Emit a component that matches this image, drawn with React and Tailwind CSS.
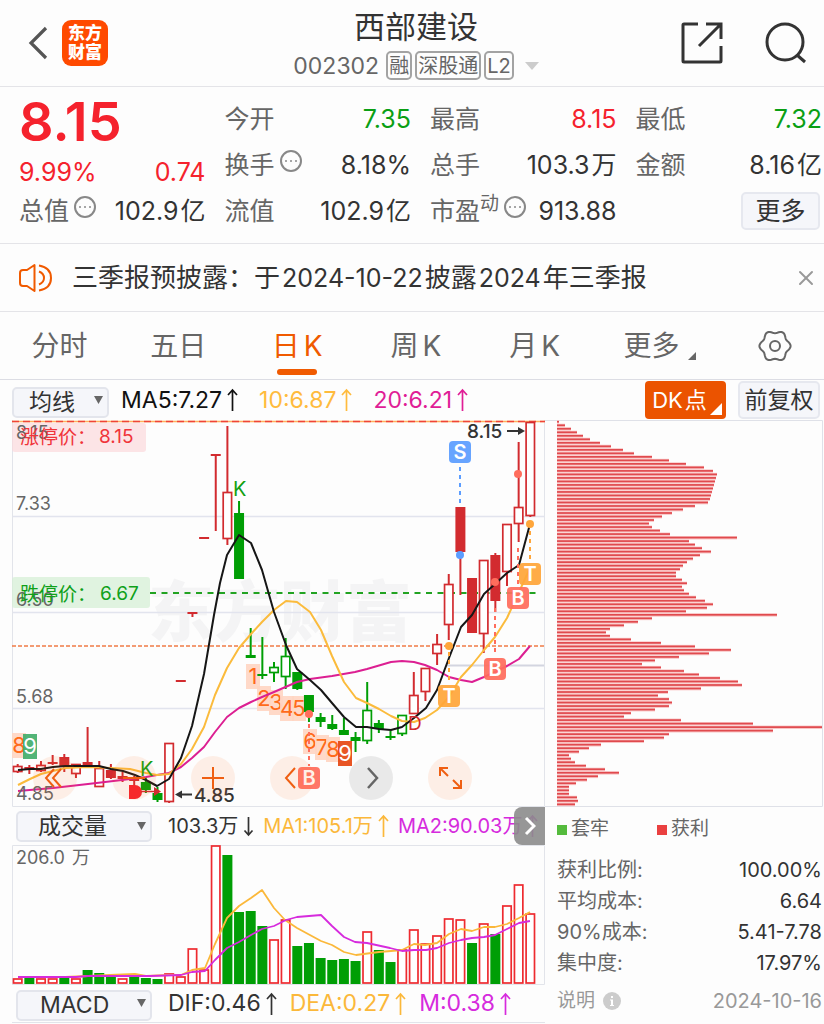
import { useState } from "react";
import { CircleEllipsis, X } from "lucide-react";

const TABS = ["分时", "五日", "日K", "周K", "月K"];

// x of the first candle and distance between candles
const X0 = 17.7;
const STEP = 11.65;
const cx = (i) => X0 + i * STEP;

// [type, high, top, bottom, low]; r/g hollow, R/G filled
const CANDLES = [
  ["r", 764, 766, 771, 773],
  ["R", 765, 767, 769, 774],
  ["r", 761, 765, 770, 772],
  ["R", 755, 762, 763, 765],
  ["R", 754, 757, 767, 772],
  ["r", 764, 764, 773, 778],
  ["R", 727, 762, 765, 766],
  ["r", 761, 768, 786, 786],
  ["R", 764, 770, 778, 779],
  ["R", 772, 776, 779, 782],
  ["R", 776, 778, 781, 785],
  ["G", 777, 782, 790, 793],
  ["G", 787, 793, 800, 802],
  ["r", 743, 743, 801, 803],
  ["R", 680, 680, 681, 681],
  ["R", 612, 612, 614, 617],
  ["R", 537, 537, 538, 538],
  ["R", 454, 454, 455, 531],
  ["r", 426, 492, 538, 545],
  ["G", 501, 513, 579, 579],
  ["G", 628, 655, 658, 658],
  ["G", 637, 674, 676, 679],
  ["g", 662, 667, 672, 682],
  ["g", 638, 656, 676, 689],
  ["G", 672, 672, 689, 690],
  ["G", 695, 695, 712, 722],
  ["G", 713, 717, 722, 727],
  ["G", 715, 724, 729, 730],
  ["G", 718, 730, 735, 735],
  ["G", 732, 737, 741, 752],
  ["g", 682, 710, 740, 744],
  ["G", 720, 723, 729, 733],
  ["G", 731, 736, 737, 740],
  ["g", 715, 715, 733, 736],
  ["r", 672, 695, 713, 713],
  ["r", 668, 668, 691, 701],
  ["r", 634, 644, 653, 665],
  ["r", 574, 584, 624, 640],
  ["R", 507, 507, 552, 595],
  ["R", 578, 578, 633, 633],
  ["r", 560, 560, 633, 653],
  ["R", 553, 555, 601, 612],
  ["r", 524, 524, 571, 586],
  ["r", 442, 507, 523, 542],
  ["r", 422, 422, 515, 517],
];

const MA5 =
  "18,770 30,769 41,769 53,767 65,766 88,766 99,766 111,769 123,771 135,775 146,780 157,786 169,779 181,758 192,726 204,674 214,615 220,583 227,555 239,535 251,543 262,570 274,612 286,645 297,669 310,680 321,690 332,703 344,717 356,727 367,727 379,729 391,730 402,727 414,718 426,708 437,690 449,658 461,627 472,615 484,594 495,584 507,573 519,565 530,524";
const MA10 =
  "18,785 30,779 41,774 53,771 65,768 88,767 111,768 130,769 146,773 157,775 169,774 181,764 192,749 204,727 215,695 227,668 239,648 251,634 262,622 274,610 286,601 297,602 310,612 321,630 332,656 344,682 356,698 367,703 379,709 391,716 402,721 414,722 425,718 437,710 449,697 461,677 472,665 484,650 495,637 507,618 519,592 530,568";
const MA20 =
  "18,791 53,788 88,784 122,780 146,777 157,775 169,773 181,767 192,758 204,747 215,732 227,717 239,708 251,702 262,697 274,692 297,682 310,679 332,676 355,672 367,669 391,662 402,661 414,662 425,665 437,670 449,677 461,680 472,682 484,677 495,672 507,666 519,659 530,646";

// [filled green, y of the top]
const VOLUMES = [
  [0, 979], [1, 978], [0, 979], [0, 979], [1, 978], [0, 979], [1, 970], [1, 973], [1, 976],
  [0, 979], [1, 977], [1, 978], [1, 979], [0, 974], [0, 977], [0, 949], [0, 970], [0, 846],
  [1, 855], [1, 912], [1, 911], [1, 926], [0, 940], [0, 920], [1, 946], [1, 943], [1, 958],
  [1, 960], [1, 959], [1, 961], [0, 932], [1, 950], [1, 962], [0, 950], [0, 930], [0, 944],
  [0, 936], [0, 919], [0, 920], [1, 943], [0, 924], [1, 934], [0, 906], [0, 885], [0, 914],
];
const VOL_MA1 =
  "18,977 65,977 88,976 110,975 135,974 146,976 169,975 181,975 192,970 205,968 215,944 227,918 239,906 251,898 262,890 274,908 285,920 297,928 321,941 332,945 344,952 356,955 379,952 391,951 402,950 414,944 425,945 437,943 449,934 461,929 472,931 484,927 495,927 507,924 519,918 530,912";
const VOL_MA2 =
  "18,977 76,977 88,976 150,976 181,975 192,972 205,971 215,960 227,948 239,942 251,935 262,929 274,926 286,920 297,917 321,915 332,926 344,937 355,942 367,943 390,948 402,951 414,950 426,950 437,948 449,943 461,940 472,938 484,937 495,935 507,929 519,923 530,921";

const CHIPS = [
  2, 8, 14, 20, 26, 33, 43, 54, 66, 77, 95, 112, 129, 147, 156, 160, 159, 158, 157, 156, 155, 154,
  153, 151, 138, 126, 115, 105, 97, 92, 95, 103, 113, 180, 132, 138, 145, 154, 143, 136, 130, 126,
  123, 119, 119, 125, 130, 125, 127, 132, 139, 148, 156, 150, 129, 220, 95, 81, 67, 53, 49, 53, 74,
  104, 138, 174, 152, 122, 98, 85, 104, 127, 142, 163, 181, 185, 144, 111, 101, 112, 115, 112, 98,
  74, 67, 124, 196, 265, 216, 112, 107, 87, 44, 32, 22, 12, 14, 18, 29, 48, 62, 41, 30, 19, 12, 12,
  12, 20, 21, 18,
];

// [digit, x, y, background, text colour]
const COUNTS = [
  ["8", 12, 733, "#ffd5c2", "#ff6a1a"],
  ["9", 23, 734, "#3fac68", "#ffffff"],
  ["1", 246, 664, "#ffd5c2", "#ff6a1a"],
  ["2", 257, 686, "#ffd5c2", "#ff6a1a"],
  ["3", 269, 690, "#ffd5c2", "#ff6a1a"],
  ["4", 280, 696, "#ffd5c2", "#ff6a1a"],
  ["5", 292, 696, "#ffd5c2", "#ff6a1a"],
  ["6", 303, 729, "#ffd5c2", "#ff6a1a"],
  ["7", 315, 735, "#ffd5c2", "#ff6a1a"],
  ["8", 326, 737, "#ffd5c2", "#ff6a1a"],
  ["9", 338, 741, "#e5420c", "#ffffff"],
];

// [letter, x, y, colour, dot y, line from, line to]
const SIGNALS = [
  ["S", 460, 452, "#5b9dff", 555, 467, 503],
  ["T", 530, 574, "#ffa63a", 524, 531, 562],
  ["B", 518, 598, "#ff6d5c", 474, 548, 586],
  ["B", 495, 669, "#ff6d5c", 582, 608, 656],
  ["T", 449, 696, "#ffa63a", 646, 652, 684],
  ["B", 309, 778, "#ff6d5c", 714, 724, 766],
];

const CHIP_STATS = [
  ["获利比例:", "100.00%"],
  ["平均成本:", "6.64"],
  ["90%成本:", "5.41-7.78"],
  ["集中度:", "17.97%"],
];

const gearPath =
  Array.from({ length: 73 }, (_, n) => {
    const a = (n * 5 * Math.PI) / 180;
    const r = 14.2 + 1.4 * Math.cos(6 * a);
    return `${n ? "L" : "M"}${(17 + r * Math.cos(a)).toFixed(2)} ${(17 + r * Math.sin(a)).toFixed(2)}`;
  }).join("") + "Z";

function Header() {
  return (
    <header className="grid h-[87px] grid-cols-[1fr_auto_1fr] items-center border-b border-[#e4e4e8]">
      <div className="flex items-center gap-3.5 pl-7">
        <button aria-label="返回">
          <svg width="20" height="34" viewBox="0 0 20 34" fill="none" stroke="#555" strokeWidth="3.2">
            <path d="M18 2L3 17L18 32" />
          </svg>
        </button>
        <a
          href="#"
          className="flex size-[46px] flex-col items-center justify-center rounded-[9px] bg-[#ff4a00] text-[17px] leading-[19px] font-black text-white"
        >
          <span>东方</span>
          <span>财富</span>
        </a>
      </div>
      <div className="flex flex-col items-center pl-2">
        <h1 className="text-[31px] leading-[46px] text-[#333]">西部建设</h1>
        <div className="flex items-center gap-[3px] pb-px text-[#666]">
          <span className="mr-1 text-[23px] leading-8">002302</span>
          <Tag>融</Tag>
          <Tag>深股通</Tag>
          <Tag>L2</Tag>
          <svg className="ml-2" width="14" height="8" viewBox="0 0 14 8" fill="#ccc">
            <path d="M0 0H14L7 8Z" />
          </svg>
        </div>
      </div>
      <div className="flex items-center justify-end gap-10 pr-4">
        <button aria-label="分享">
          <svg width="44" height="44" viewBox="0 0 44 44" fill="none" stroke="#333" strokeWidth="3">
            <path d="M18 3H4Q3 3 3 4V40Q3 41 4 41H40Q41 41 41 40V25" />
            <path d="M26 3H41V18M41 3L19 25" />
          </svg>
        </button>
        <button aria-label="搜索">
          <svg width="44" height="44" viewBox="0 0 44 44" fill="none" stroke="#333" strokeWidth="3">
            <circle cx="21" cy="21" r="18" />
            <path d="M33 34L41 41" />
          </svg>
        </button>
      </div>
    </header>
  );
}

function Tag({ children }) {
  return (
    <span className="flex h-[29px] items-center rounded-[5px] border-2 border-[#a3a3a3] px-px text-[20px] leading-none">
      {children}
    </span>
  );
}

function Stat({ label, sup, info, value, unit, color = "text-[#333]" }) {
  return (
    <div className="flex h-[46px] items-center justify-between">
      <dt className="flex items-center text-[#666]">
        {label}
        {sup && <sup className="top-0 -mt-4 text-[19px] leading-none">{sup}</sup>}
        {info && <CircleEllipsis className="-mt-2 ml-1 text-[#888]" size={24} strokeWidth={2} />}
      </dt>
      <dd className={color}>
        {value}
        {unit && <span className="ml-0.5">{unit}</span>}
      </dd>
    </div>
  );
}

function Quote() {
  return (
    <section className="grid grid-cols-4 gap-[19px] border-b border-[#e4e4e8] pt-[9px] pr-0.5 pb-[9px] pl-[19px] text-[25px] leading-8 whitespace-nowrap">
      <div>
        <p className="h-14 text-[54px] leading-[52px] font-semibold text-[#f5222d]">8.15</p>
        <p className="flex h-9 items-center justify-between pt-1 text-[#f5222d]">
          <span>9.99%</span>
          <span>0.74</span>
        </p>
        <dl>
          <Stat label="总值" info value="102.9" unit="亿" />
        </dl>
      </div>
      <dl>
        <Stat label="今开" value="7.35" color="text-[#0a9f14]" />
        <Stat label="换手" info value="8.18%" />
        <Stat label="流值" value="102.9" unit="亿" />
      </dl>
      <dl>
        <Stat label="最高" value="8.15" color="text-[#f5222d]" />
        <Stat label="总手" value="103.3" unit="万" />
        <Stat label="市盈" sup="动" info value="913.88" />
      </dl>
      <div>
        <dl>
          <Stat label="最低" value="7.32" color="text-[#0a9f14]" />
          <Stat label="金额" value="8.16" unit="亿" />
        </dl>
        <div className="flex h-[46px] items-center justify-end pr-0.5">
          <button className="h-[38px] w-[79px] rounded-[5px] border-2 border-[#e6e8ef] bg-[#f5f6fa] text-[25px] leading-none text-[#333]">
            更多
          </button>
        </div>
      </div>
    </section>
  );
}

function Notice() {
  return (
    <section className="flex h-[68px] items-center border-b border-[#e4e4e8] pr-1.5 pl-[19px]">
      <svg width="34" height="30" viewBox="0 0 34 30" fill="none" stroke="#f05a00" strokeWidth="2">
        <path d="M15.500 2V28L8 23H4Q1 23 1 20V10Q1 7 4 7H8Z" strokeLinejoin="round" />
        <path d="M20 8.500Q25 10.500 25 15T20 21.500M20 2.500Q32 4.500 32 15T20 27.500" />
      </svg>
      <p className="ml-[19px] flex-1 text-[26px] leading-9 whitespace-nowrap text-[#333]">
        三季报预披露：于<span className="mx-0.5 text-[25px]">2024-10-22</span>披露
        <span className="mx-0.5 text-[25px]">2024</span>年三季报
      </p>
      <button aria-label="关闭">
        <X className="text-[#999]" size={24} strokeWidth={2} />
      </button>
    </section>
  );
}

function Tabs({ active, onChange }) {
  return (
    <nav className="grid h-[68px] grid-cols-[repeat(6,1fr)_111px] border-b border-[#dcdde4] text-[28px] text-[#666]">
      {TABS.map((tab) => (
        <button
          key={tab}
          onClick={() => onChange(tab)}
          className={`relative flex items-center justify-center ${active === tab ? "text-[#f05a00]" : ""}`}
        >
          <span>{tab[0]}</span>
          <span className={tab[1] === "K" ? "ml-1" : ""}>{tab[1]}</span>
          {active === tab && (
            <span className="absolute bottom-1 h-1.5 w-10 rounded-full bg-[#f05a00]" />
          )}
        </button>
      ))}
      <button className="flex items-center justify-center gap-2 pl-3">
        更多
        <svg className="mt-5" width="8" height="8" viewBox="0 0 8 8" fill="#666">
          <path d="M8 0V8H0Z" />
        </svg>
      </button>
      <button aria-label="设置" className="flex items-center justify-center pl-3">
        <svg width="34" height="34" viewBox="0 0 34 34" fill="none" stroke="#666" strokeWidth="2">
          <path d={gearPath} strokeLinejoin="round" />
          <circle cx="17" cy="17" r="5" />
        </svg>
      </button>
    </nav>
  );
}

function Picker({ label, options, className }) {
  return (
    <div className={`relative h-[31px] shrink-0 ${className}`}>
      <select
        aria-label={label}
        className="h-full w-full appearance-none rounded-[5px] border-2 border-[#e3e5ec] bg-[#f5f6fa] pr-6 text-[23px] leading-none text-[#333]"
      >
        {options.map((o) => (
          <option key={o}>{o}</option>
        ))}
      </select>
      <svg
        className="pointer-events-none absolute top-[11px] right-1.5"
        width="9"
        height="8"
        viewBox="0 0 9 8"
        fill="#666"
      >
        <path d="M0 0H9L4.500 8Z" />
      </svg>
    </div>
  );
}

function Reading({ text, down, color, className = "" }) {
  return (
    <span className={`flex shrink-0 items-center gap-1 whitespace-nowrap ${color} ${className}`}>
      {text}
      <svg width="13" height="24" viewBox="0 0 13 24" fill="none" stroke="currentColor" strokeWidth="1.7">
        {down ? <path d="M6.500 3V21M2.500 16.500L6.500 21L10.500 16.500" /> : <path d="M6.500 23V2M2 7L6.500 2L11 7" />}
      </svg>
    </span>
  );
}

function ChartToolbar() {
  return (
    <div className="flex h-10 items-center pl-3 text-[23px]">
      <Picker label="指标" options={["均线", "BOLL"]} className="w-[97px] [&>select]:pl-[15px]" />
      <Reading className="ml-3" text="MA5:7.27" color="text-[#111]" />
      <Reading className="ml-5" text="10:6.87" color="text-[#ffbb3d]" />
      <Reading className="ml-5" text="20:6.21" color="text-[#e01e96]" />
      <div className="ml-auto flex items-center gap-3 pr-1">
        <button className="relative h-[38px] w-[81px] rounded-[4px] bg-[#eb5300] pr-3 text-[22px] leading-none whitespace-nowrap text-white">
          DK<span className="ml-0.5">点</span>
          <svg className="absolute right-1 bottom-1" width="12" height="12" viewBox="0 0 12 12" fill="#fff">
            <path d="M12 0V12H0Z" />
          </svg>
        </button>
        <button className="h-[38px] w-[82px] rounded-[5px] border-2 border-[#e6e8ef] bg-[#f5f6fa] text-[23px] leading-none whitespace-nowrap text-[#333]">
          前复权
        </button>
      </div>
    </div>
  );
}

function Candle({ index, data }) {
  const [type, high, top, bottom, low] = data;
  const color = type.toLowerCase() === "r" ? "#d22b2f" : "#009e05";
  const x = cx(index);
  const hollow = type === "r" || type === "g";
  return (
    <g stroke={color} strokeWidth="2">
      {high < top && <path d={`M${x} ${high}V${top}`} />}
      {low > bottom && <path d={`M${x} ${bottom}V${low}`} />}
      {hollow ? (
        <rect x={x - 4.2} y={top + 0.5} width="8.4" height={bottom - top} fill="#fff" strokeWidth="1.7" />
      ) : (
        <rect x={x - 5} y={top} width="10" height={Math.max(bottom - top, 2)} fill={color} stroke="none" />
      )}
    </g>
  );
}

function Signal({ data }) {
  const [letter, x, y, color, dot, from, to] = data;
  return (
    <g>
      <path d={`M${x} ${from}V${to}`} stroke={color} strokeWidth="2" strokeDasharray="4 4" />
      <circle cx={x} cy={dot} r="4" fill={color} />
      <rect x={x - 11} y={y - 11} width="22" height="22" rx="4" fill={color} fillOpacity="0.93" />
      <text x={x} y={y + 7} fontSize="20" fontWeight="600" fill="#fff" textAnchor="middle">
        {letter}
      </text>
    </g>
  );
}

function PriceChart() {
  return (
    <svg className="h-auto w-full" viewBox="12 420 533 387" fill="none">
      <text x="148" y="636" fontSize="66" fontWeight="900" fill="#f4f4f5">
        东方财富
      </text>
      <path d="M12 516.500H545M12 612.500H545M12 708.500H545" stroke="#e2e4ee" strokeWidth="1.5" />
      <path d="M446 665.500H545" stroke="#d3d5e0" strokeWidth="2" />
      <path d="M12.500 420V806.500H544.500V420" stroke="#e2e4ea" />
      <path d="M12 421.500H545" stroke="#ffb15c" strokeWidth="1.500" />
      <path d="M12 421.500H545" stroke="#f04438" strokeWidth="1.500" strokeDasharray="7 4" />
      <path d="M12 646H545" stroke="#ef7b45" strokeWidth="1.600" strokeDasharray="4 2" />
      <path d="M150 593H541" stroke="#22a322" strokeWidth="2" strokeDasharray="6 5.500" />

      {COUNTS.map(([n, x, y, bg, fg]) => (
        <g key={`${n}-${x}`}>
          <rect x={x} y={y} width="14" height="25" fill={bg} fillOpacity="0.9" />
          <text x={x + 7} y={y + 20} fontSize="22" fill={fg} textAnchor="middle">
            {n}
          </text>
        </g>
      ))}

      {CANDLES.map((c, i) => (
        <Candle key={i} index={i} data={c} />
      ))}

      <g strokeWidth="2" strokeLinejoin="round">
        <polyline points={MA20} stroke="#dc1f92" />
        <polyline points={MA10} stroke="#fbbb3c" />
        <polyline points={MA5} stroke="#161616" />
      </g>

      {/* price limits, with the axis labels showing through */}
      <rect x="12" y="423" width="134" height="29" rx="3" fill="#fbd9dc" fillOpacity="0.7" />
      <rect x="12" y="577" width="138" height="31" rx="3" fill="#d5efd5" fillOpacity="0.75" />
      <g fontSize="18" fill="#666">
        <text x="16" y="439">8.15</text>
        <text x="16" y="510">7.33</text>
        <text x="16" y="606">6.50</text>
        <text x="16" y="703">5.68</text>
        <text x="16" y="800">4.85</text>
      </g>
      <g fontSize="19" fill="#f0343a">
        <text x="20" y="444">涨停价：</text>
        <text x="99" y="443">8.15</text>
      </g>
      <g fontSize="19" fill="#0fa01a">
        <text x="20" y="601">跌停价：</text>
        <text x="100" y="600">6.67</text>
      </g>

      <g fontSize="20" fill="#12a012">
        <text x="233" y="496">K</text>
        <text x="140" y="776">K</text>
      </g>
      <text x="408" y="730" fontSize="19" fill="#d22b2f">
        D
      </text>
      <path d="M129 785H135A7 7 0 0 1 135 799H129Z" fill="#f5222d" />
      <path d="M141 791.500H156" stroke="#d22b2f" strokeWidth="1.500" />
      <path d="M154 787L161 791.500L154 796Z" fill="#d22b2f" />

      {SIGNALS.map((s) => (
        <Signal key={`${s[0]}-${s[1]}`} data={s} />
      ))}

      <g fontSize="19" fontWeight="500" fill="#333">
        <text x="467" y="438">8.15</text>
        <text x="194" y="802">4.85</text>
      </g>
      <path d="M507 431H520M192 794.500H180" stroke="#333" strokeWidth="2" />
      <path d="M518 427L525 431L518 435ZM182 790.500L175 794.500L182 798.500Z" fill="#333" />
    </svg>
  );
}

function RoundButton({ label, gray, children }) {
  return (
    <button
      aria-label={label}
      className={`flex size-11 items-center justify-center rounded-full ${
        gray ? "bg-black/8 text-[#666]" : "bg-[#ff6a1a]/10 text-[#ef5f12]"
      }`}
    >
      <svg width="28" height="28" viewBox="0 0 28 28" fill="none" stroke="currentColor" strokeWidth="2">
        {children}
      </svg>
    </button>
  );
}

function ChartControls() {
  return (
    <div className="absolute bottom-[7px] left-[21px] flex gap-[35px]">
      <RoundButton label="最早">
        <path d="M13 5L5 14L13 23M20 5L12 14L20 23" />
      </RoundButton>
      <RoundButton label="缩小">
        <path d="M3 14H25" />
      </RoundButton>
      <RoundButton label="放大">
        <path d="M3 14H25M14 3V25" />
      </RoundButton>
      <RoundButton label="向前">
        <path d="M17 4L8 14L17 24" />
      </RoundButton>
      <RoundButton label="向后" gray>
        <path d="M11 4L20 14L11 24" strokeWidth="2.500" />
      </RoundButton>
      <RoundButton label="全屏">
        <path d="M4 12V4H12M4 4L12 12M25 16V24H17M25 24L17 16" />
      </RoundButton>
    </div>
  );
}

function VolumeChart() {
  return (
    <svg className="h-auto w-full" viewBox="12 845 533 140" fill="none">
      <path d="M12.500 985V845.500H544.500V984.500H12" stroke="#e2e4ea" />
      <text x="16" y="864" fontSize="18" fill="#666">
        206.0
      </text>
      <text x="72" y="864" fontSize="18" fill="#666">
        万
      </text>
      {VOLUMES.map(([green, top], i) =>
        green ? (
          <rect key={i} x={cx(i) - 5} y={top} width="10" height={984 - top} fill="#009e05" />
        ) : (
          <rect
            key={i}
            x={cx(i) - 4.2}
            y={top}
            width="8.4"
            height={983 - top}
            fill="#fff"
            stroke="#ee2b30"
            strokeWidth="1.7"
          />
        ),
      )}
      <g strokeWidth="1.8" strokeLinejoin="round">
        <polyline points={VOL_MA1} stroke="#fbb83a" />
        <polyline points={VOL_MA2} stroke="#d62bdd" />
      </g>
    </svg>
  );
}

function ChipPanel() {
  return (
    <aside>
      <svg className="h-auto w-full" viewBox="545 420 279 387">
        <path d="M545 420.500H822.500V806.500H545" fill="none" stroke="#dfe1e8" />
        {CHIPS.map((w, k) => (
          <g key={k}>
            <rect x="557" y={420.2 + k * 3.51} width={w} height="3.4" fill="#f9c4c4" />
            <rect x="557" y={420.9 + k * 3.51} width={w} height="1.7" fill="#e04a4e" />
          </g>
        ))}
      </svg>
      <div className="flex flex-col pr-0.5 pl-3 text-[20px] text-[#666]">
        <div className="flex h-[45px] items-center gap-12 text-[19px]">
          <span className="flex items-center gap-1">
            <i className="size-2.5 bg-[#55bb3d]" />
            套牢
          </span>
          <span className="flex items-center gap-1">
            <i className="size-2.5 bg-[#ea4040]" />
            获利
          </span>
        </div>
        <dl className="pt-0.5">
          {CHIP_STATS.map(([label, value]) => (
            <div key={label} className="flex h-[31px] items-center justify-between">
              <dt>{label}</dt>
              <dd className="text-[#333]">{value}</dd>
            </div>
          ))}
        </dl>
        <div className="flex h-[46px] items-center justify-between text-[#999]">
          <button className="flex items-center gap-2 text-[19px]">
            说明
            <svg width="18" height="18" viewBox="0 0 18 18">
              <circle cx="9" cy="9" r="9" fill="#ccc" />
              <path d="M8 4H10V6H8ZM7 7.500H10V13H11V14H7V13H8V8.500H7Z" fill="#fff" />
            </svg>
          </button>
          <time>2024-10-16</time>
        </div>
      </div>
    </aside>
  );
}

export default function App() {
  const [tab, setTab] = useState("日K");

  return (
    <div className="w-full overflow-hidden bg-[#fdfdfd] font-['Inter','Noto_Sans_CJK_SC',sans-serif]">
      <Header />
      <Quote />
      <Notice />
      <Tabs active={tab} onChange={setTab} />
      <ChartToolbar />
      <main className="grid grid-cols-[533fr_279fr] pl-3">
        <div className="min-w-0">
          <div className="relative">
            <PriceChart />
            <ChartControls />
          </div>
          <div className="relative flex h-[38px] items-center overflow-hidden pl-1 text-[20px]">
            <Picker
              label="副图一"
              options={["成交量", "成交额"]}
              className="w-[136px] [&>select]:pl-5"
            />
            <Reading className="ml-4" text="103.3万" down color="text-[#333]" />
            <Reading className="ml-2" text="MA1:105.1万" color="text-[#fbb83a]" />
            <Reading className="ml-2" text="MA2:90.03万" color="text-[#d62bdd]" />
            <button
              aria-label="展开"
              className="absolute inset-y-0 right-0 flex w-[31px] items-center justify-center rounded-l-lg bg-[#8c8c8c]/90"
            >
              <svg width="12" height="20" viewBox="0 0 12 20" fill="none" stroke="#fff" strokeWidth="3">
                <path d="M2 2L10 10L2 18" />
              </svg>
            </button>
          </div>
          <VolumeChart />
          <div className="flex h-[37px] items-center pl-1 text-[23px]">
            <Picker label="副图二" options={["MACD", "KDJ"]} className="w-[136px] [&>select]:pl-[22px]" />
            <Reading className="ml-4" text="DIF:0.46" color="text-[#333]" />
            <Reading className="ml-3" text="DEA:0.27" color="text-[#fbb83a]" />
            <Reading className="ml-3" text="M:0.38" color="text-[#d62bdd]" />
          </div>
          <div className="h-0.5 border-t border-[#e2e4ea]" />
        </div>
        <ChipPanel />
      </main>
    </div>
  );
}
